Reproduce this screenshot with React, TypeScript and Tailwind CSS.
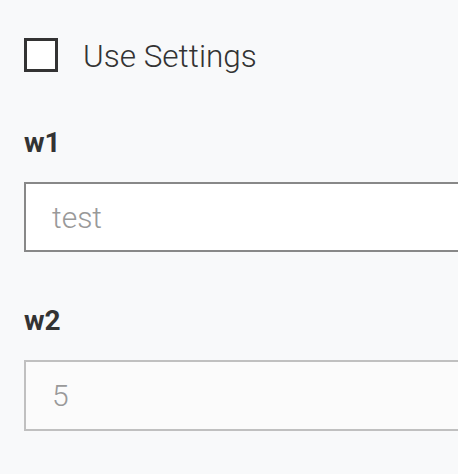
import React from 'react';

export default function App() {
  return (
    <div
      className="min-h-screen w-full overflow-hidden bg-[#f8f9fa] pl-6 pt-[38px]"
      style={{ fontFamily: 'Roboto, "Liberation Sans", sans-serif' }}
    >
      {/* Checkbox row */}
      <label className="flex h-[34px] items-center gap-[25px]">
        <span className="block h-[34px] w-[34px] shrink-0 border-[3px] border-[#333] bg-white" />
        <span className="mt-1 text-[31.5px] font-light leading-[34px] text-[#333]">Use Settings</span>
      </label>

      {/* w1 */}
      <div className="mt-[54px] text-[28px] font-bold leading-[34px] text-[#333]">w1</div>
      <div className="mt-[22px] flex h-[70px] w-[460px] items-center border-2 border-[#888] bg-white pl-[26px]">
        <span className="text-[30px] font-light text-[#999]">test</span>
      </div>

      {/* w2 */}
      <div className="mt-[52px] text-[28px] font-bold leading-[34px] text-[#333]">w2</div>
      <div className="mt-[22px] flex h-[71px] w-[460px] items-center border-2 border-[#c0c0c0] bg-[#fbfbfb] pl-[26px]">
        <span className="text-[30px] font-light text-[#999]">5</span>
      </div>
    </div>
  );
}
